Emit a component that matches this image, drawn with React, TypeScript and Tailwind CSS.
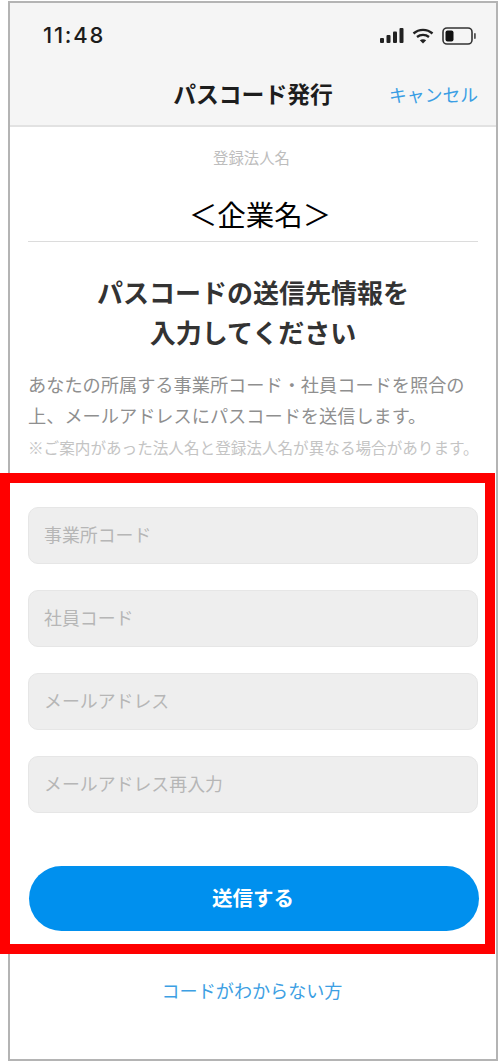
export default function App() {
  const font = { fontFamily: '"Noto Sans CJK JP", "Noto Sans", sans-serif' };
  const fields = ["事業所コード", "社員コード", "メールアドレス", "メールアドレス再入力"];
  return (
    <div className="relative h-[1062px] w-[500px] bg-white" style={font}>
      <div className="ml-2 mt-[1px] flex h-[1060px] w-[490px] flex-col border-2 border-[#b4b4b4]">
        <header className="h-[124px] shrink-0 border-b-2 border-[#e2e2e2] bg-[#f5f5f5]">
          <div className="flex h-[63px] items-center justify-between pl-[33px] pr-[20px] pt-[1px]">
            <span className="text-[22px] font-medium leading-none tracking-[1.8px] text-[#1c1c1c]" style={{ fontFamily: "Inter, sans-serif" }}>11:48</span>
            <div className="mt-[1px] flex items-center gap-[8px]">
              <svg width="24" height="15" viewBox="0 0 24 15" fill="#222">
                <rect x="0" y="10" width="4" height="5" rx="1" />
                <rect x="6.5" y="7" width="4" height="8" rx="1" />
                <rect x="13" y="3.5" width="4" height="11.5" rx="1" />
                <rect x="19.5" y="0" width="4" height="15" rx="1" />
              </svg>
              <svg width="22" height="16" viewBox="0 0 22 16" fill="none" stroke="#222" strokeWidth="2.4">
                <path d="M1.5 5.5C7 .6 15 .6 20.5 5.5" />
                <path d="M5 9c3.500-2.800 8.500-2.800 12 0" />
                <path d="M11 15.500l-3.200-3.300c1.800-1.400 4.600-1.400 6.400 0z" fill="#222" stroke="none" />
              </svg>
              <svg width="34" height="18" viewBox="0 0 34 18" fill="none">
                <rect x="1" y="1" width="29" height="16" rx="4" stroke="#333" strokeWidth="1.6" />
                <rect x="3.500" y="3.500" width="8" height="11" rx="2" fill="#111" />
                <rect x="32" y="6" width="1.800" height="6" rx="0.900" fill="#555" />
              </svg>
            </div>
          </div>
          <div className="relative flex h-[59px] items-center justify-center pb-[2px]">
            <span className="text-[22.800px] font-bold leading-none text-[#1d1d1d]">パスコード発行</span>
            <span className="absolute right-[18px] top-[15px] text-[17.800px] leading-[26px] text-[#3a9ee4]">キャンセル</span>
          </div>
        </header>
        <main className="flex flex-col px-[18px]">
          <p className="mt-[20px] pr-[3px] text-center text-[15.400px] leading-[20px] text-[#bdbdbd]">登録法人名</p>
          <p className="mt-[28px] pl-[14px] text-center text-[28.500px] leading-[38px] text-black">＜企業名＞</p>
          <div className="mt-[8px] h-[1px] bg-[#dcdcdc]" />
          <h1 className="mt-[30px] text-center text-[26px] font-bold leading-[40px] text-[#333333]">
            パスコードの送信先情報を
            <br />
            入力してください
          </h1>
          <p className="mt-[17px] whitespace-nowrap text-[18.200px] leading-[31px] text-[#8f8f8f]">
            あなたの所属する事業所コード・社員コードを照合の
            <br />
            上、メールアドレスにパスコードを送信します。
          </p>
          <p className="mt-[5px] whitespace-nowrap text-[15.600px] leading-[22px] text-[#c4c4c4]">※ご案内があった法人名と登録法人名が異なる場合があります。</p>
          <div className="mt-[49px] flex flex-col gap-[26px]">
            {fields.map((f) => (
              <input
                key={f}
                placeholder={f}
                readOnly
                className="h-[57px] w-full rounded-[10px] border border-[#e6e6e6] bg-[#eeeeee] px-[15px] pb-[3px] text-[17.900px] outline-none placeholder:text-[#b6b6b6]"
                style={font}
              />
            ))}
          </div>
          <button className="ml-[1px] mt-[53px] h-[65px] w-[450px] rounded-full bg-[#0090ee] pb-[2px] pr-[2px] text-[20.500px] font-bold text-white" style={font}>
            送信する
          </button>
          <a className="mt-[46px] block pr-[2px] text-center text-[18.100px] leading-[26px] text-[#3d9fe3]">コードがわからない方</a>
        </main>
      </div>
      <div className="absolute left-0 top-[472px] h-[481px] w-[495px] border-[10.500px] border-[#ff0000]" />
    </div>
  );
}
